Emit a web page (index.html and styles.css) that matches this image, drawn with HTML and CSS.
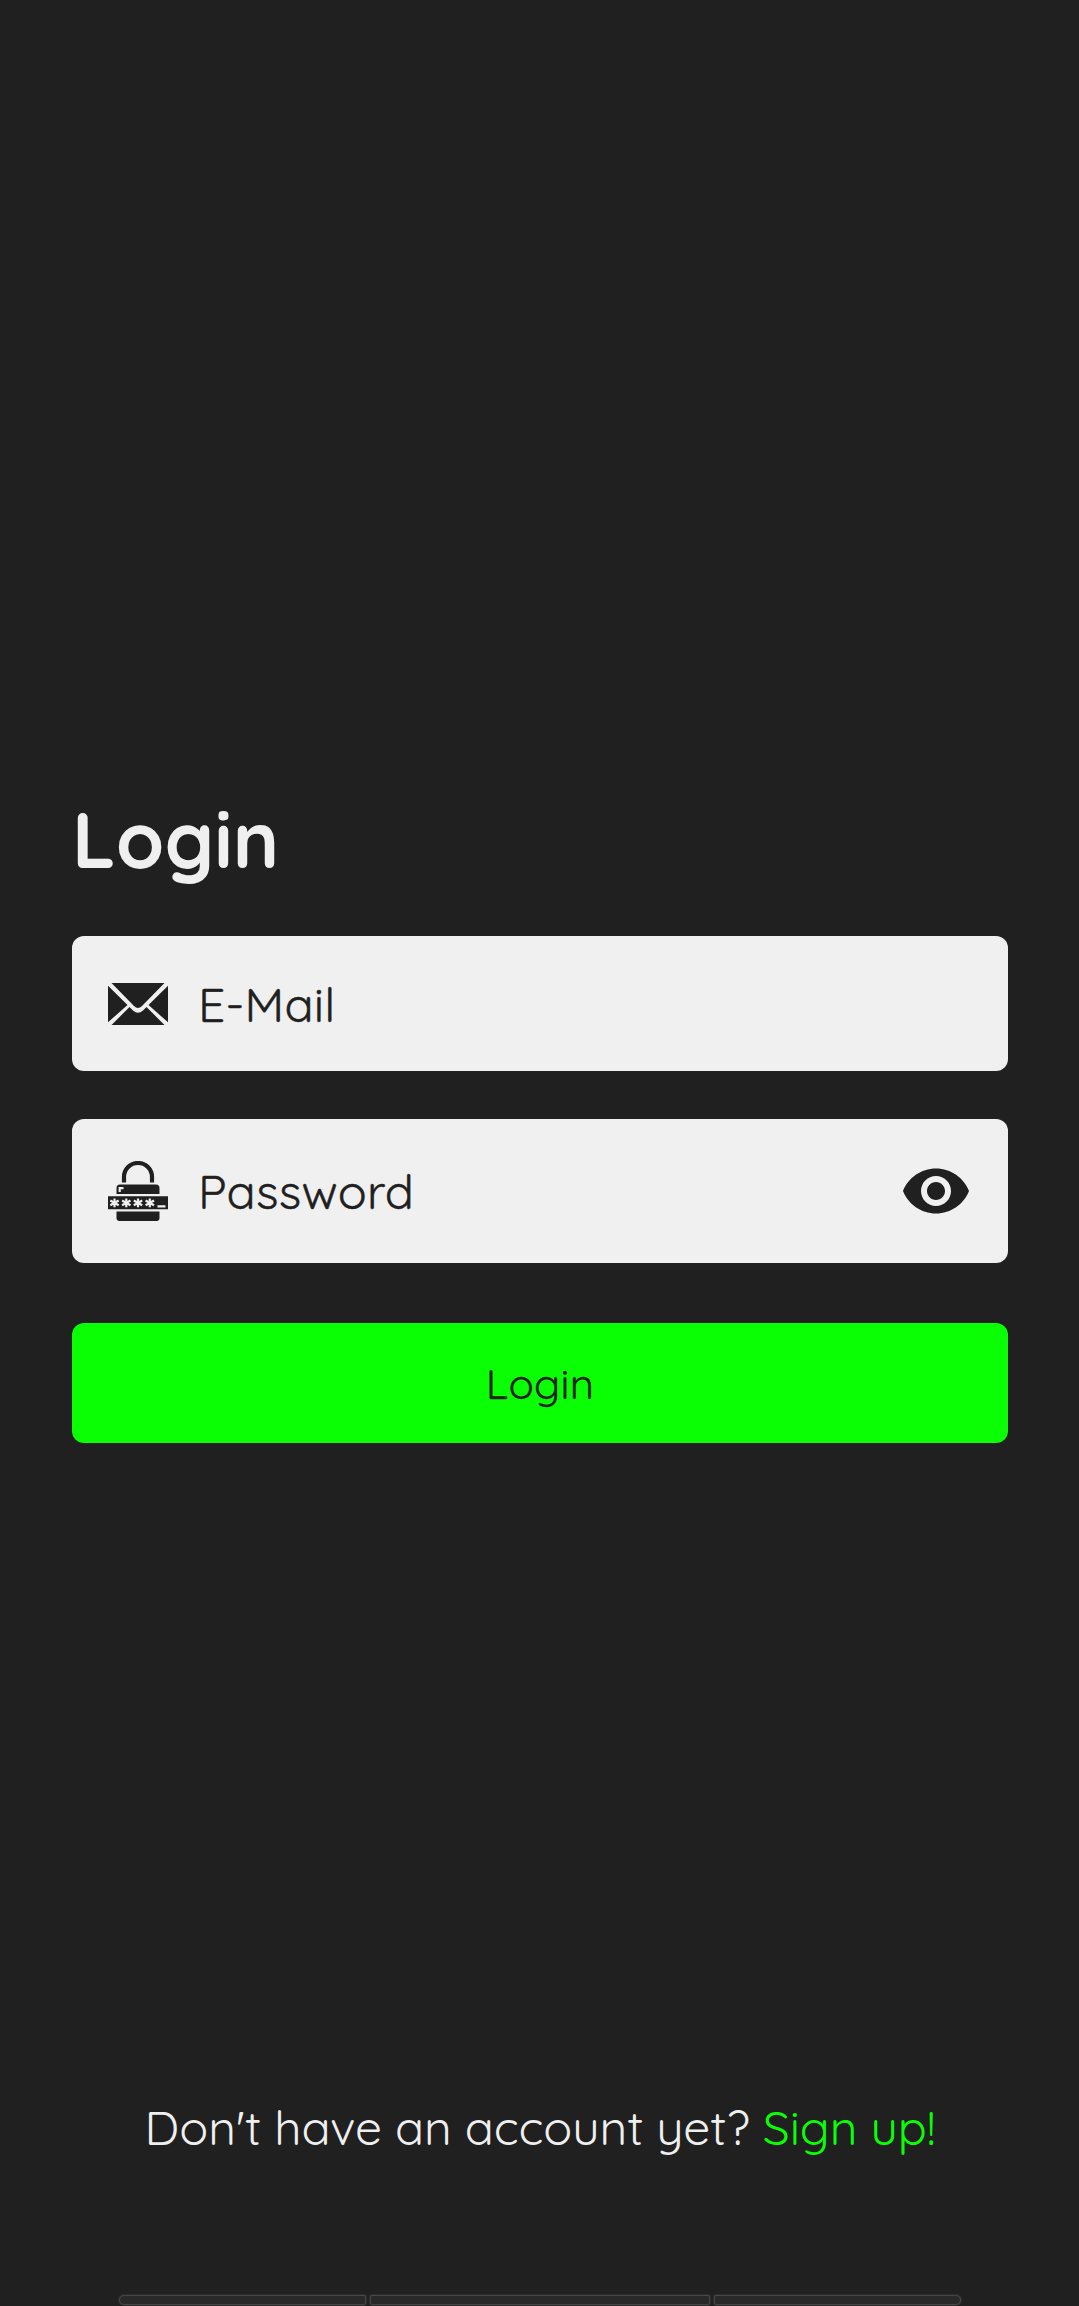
FILE: index.html
```html
<!DOCTYPE html>
<html lang="en">
<head>
<meta charset="utf-8">
<title>Login</title>
<link rel="stylesheet" href="styles.css">
</head>
<body>
<main class="screen">
  <form class="login">
    <h1 class="title">Login</h1>
    <label class="field field-email">
      <svg class="icon" viewBox="0 0 60 60" aria-hidden="true">
        <path d="M3.500 9H56.500L34 32Q30 36 26 32ZM0 11.700L19.500 31L0 48.300ZM60 11.700L40.500 31L60 48.300ZM3.500 51L21.500 33L25 36.500Q30 41 35 36.500L38.500 33L56.500 51Z"/>
      </svg>
      <span class="hint">E-Mail</span>
    </label>
    <label class="field field-password">
      <svg class="icon" viewBox="0 0 60 60" aria-hidden="true">
        <path class="shackle" d="M16 21.500V16a14 14 0 0 1 28 0v5.500"/>
        <path d="M12 23.500H48Q51.500 23.500 51.500 27V33H8.500V27Q8.500 23.500 12 23.500ZM0 35.300H60V48.300H0ZM8.500 50.500H51.500V57Q51.500 60 48.500 60H11.500Q8.500 60 8.500 57Z"/>
        <path class="cutout" d="M11.700 31V27.200H15.500M49.500 45.300H57.500"/>
        <path class="cutout" d="M6.500 37.500v8.800M2.300 39.500l8.400 4.800M10.700 39.500l-8.400 4.800M18.300 37.500v8.800M14.100 39.500l8.400 4.800M22.500 39.500l-8.400 4.800M30 37.500v8.800M25.800 39.500l8.400 4.800M34.200 39.500l-8.400 4.800M41.800 37.500v8.800M37.600 39.500l8.400 4.800M46 39.500l-8.400 4.800"/>
      </svg>
      <span class="hint">Password</span>
      <svg class="eye" viewBox="0 0 24 24" aria-hidden="true">
        <path d="M12 4.500C7 4.500 2.730 7.610 1 12c1.730 4.390 6 7.500 11 7.500s9.270-3.110 11-7.500c-1.730-4.390-6-7.500-11-7.500zM12 17c-2.760 0-5-2.240-5-5s2.240-5 5-5 5 2.240 5 5-2.240 5-5 5zm0-8c-1.660 0-3 1.340-3 3s1.340 3 3 3 3-1.340 3-3-1.340-3-3-3z"/>
      </svg>
    </label>
    <button class="submit" type="button">Login</button>
  </form>
  <p class="signup">Don't have an account yet? <a class="link">Sign up!</a></p>
  <div class="keys"><i class="key first"></i><i class="key"></i><i class="key last"></i></div>
</main>
</body>
</html>
```

FILE: styles.css
```css
* { box-sizing: border-box; }
body {
  margin: 0;
  background: #202020;
  color: #efefef;
  font-family: Quicksand, Inter, sans-serif;
}
.screen {
  height: 2306px;
  padding: 790px 71px 0 72px;
  display: flex;
  flex-direction: column;
  overflow: hidden;
}
.login { display: flex; flex-direction: column; }
.title {
  margin: 0;
  height: 146px;
  font-size: 78px;
  line-height: 98px;
  font-weight: 700;
  white-space: nowrap;
}
.field {
  display: flex;
  align-items: center;
  padding: 0 36px;
  border-radius: 12px;
  background: #f0f0f0;
  color: #202020;
}
.field-email { height: 135px; margin-bottom: 48px; }
.field-password { height: 144px; margin-bottom: 60px; }
.icon { width: 60px; height: 60px; margin-right: 30px; fill: #202020; }
.shackle { fill: none; stroke: #202020; stroke-width: 4.2; }
.cutout { fill: none; stroke: #f0f0f0; stroke-width: 2.2; }
.hint {
  font-size: 48px;
  line-height: 60px;
  font-weight: 400;
  letter-spacing: 0.25px;
  white-space: nowrap;
  -webkit-text-stroke: 0.4px currentColor;
}
.eye { width: 72px; height: 72px; margin-left: auto; fill: #202020; }
.submit {
  height: 120px;
  padding: 2px 0 0;
  border: 0;
  border-radius: 12px;
  background: #0aff05;
  color: #202020;
  font: 400 42px/52px Quicksand, Inter, sans-serif;
  letter-spacing: 0.25px;
  -webkit-text-stroke: 0.3px currentColor;
}
.signup {
  margin: 654px 0 0;
  height: 60px;
  font-size: 48px;
  line-height: 60px;
  font-weight: 400;
  letter-spacing: -0.08px;
  text-align: center;
  white-space: nowrap;
}
.link { color: #0aff05; }
.keys { display: flex; gap: 4px; margin: 138px 0 0 47px; height: 10px; }
.key {
  width: 340px;
  background: #292929;
  border: 1px solid #474747;
  border-radius: 2px;
  box-shadow: 0 0 2px #505050;
}
.first { width: 247px; border-radius: 5px 2px 2px 5px; }
.last { width: 247px; border-radius: 2px 5px 5px 2px; }
```
